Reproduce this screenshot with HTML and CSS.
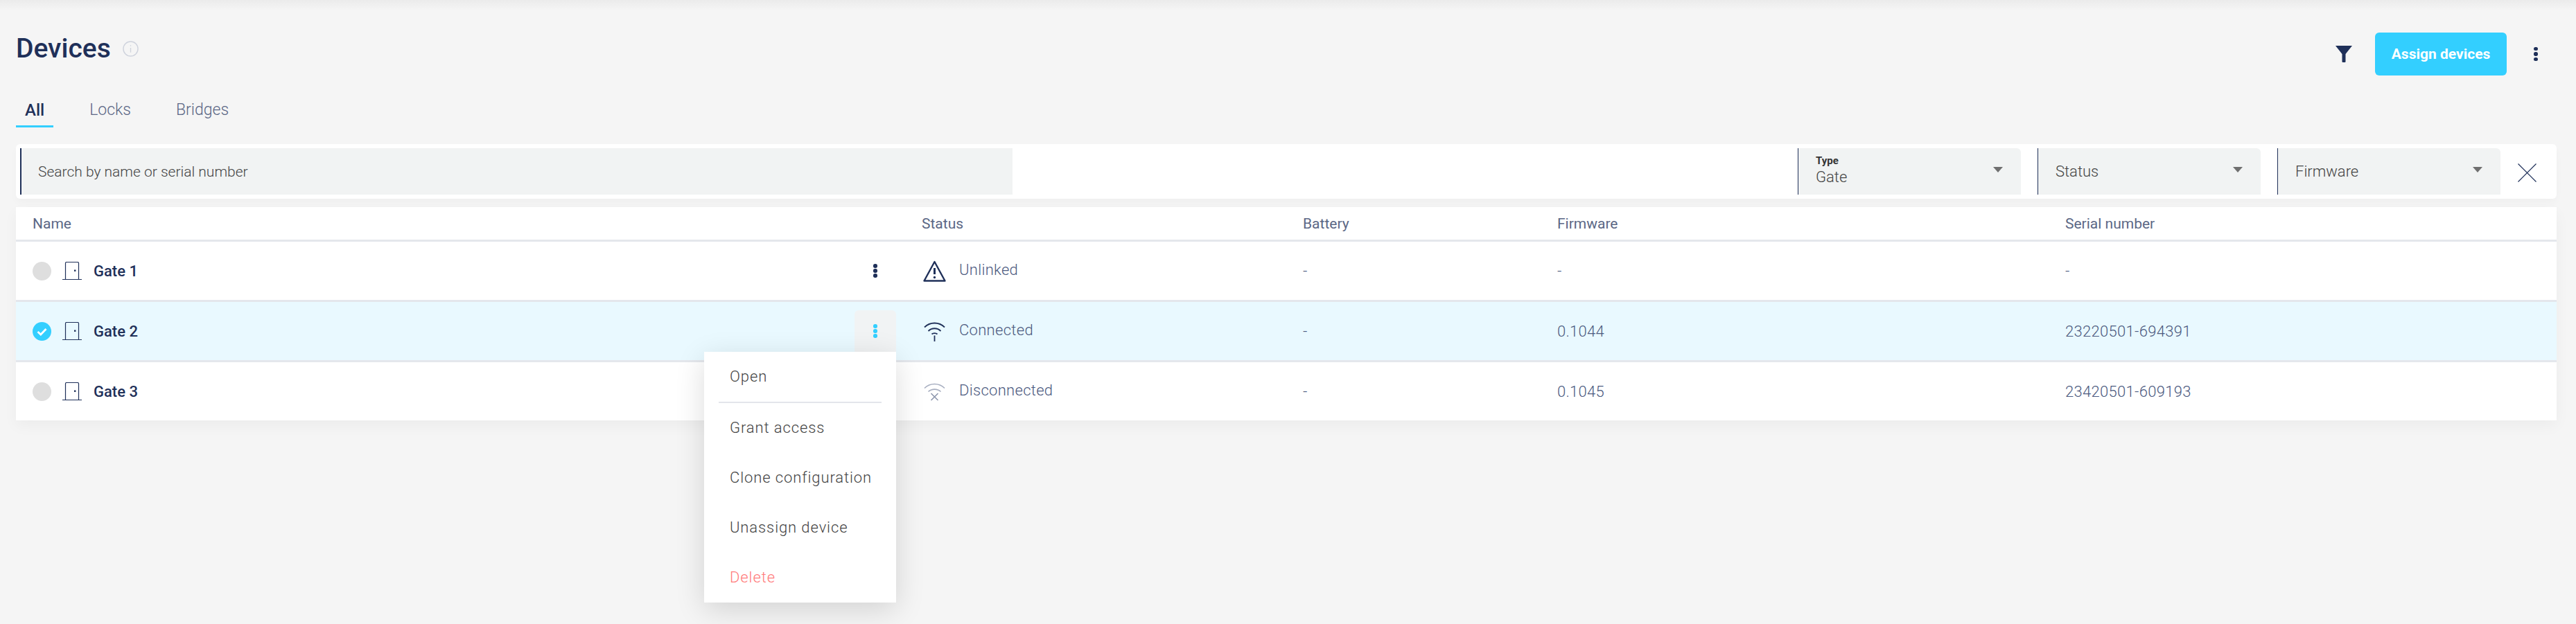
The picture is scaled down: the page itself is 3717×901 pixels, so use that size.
FILE: index.html
```html
<!DOCTYPE html>
<html lang="en">
<head>
  <meta charset="UTF-8" />
  <title>Devices</title>
  <link rel="stylesheet" href="styles.css">
</head>
<body>
  <div class="top-shade"></div>
  <div class="page">
    <div class="page-head">
      <div class="title-wrap">
        <h1>Devices</h1>
        <svg class="info-icon" viewBox="0 0 24 24"><circle cx="12" cy="12" r="11" fill="none" stroke="#cfd3dd" stroke-width="1.5"/><path d="M12 10.5v7M12 6.5v1.6" stroke="#cfd3dd" stroke-width="1.4" fill="none"/></svg>
      </div>
      <div class="head-actions">
        <svg class="funnel" viewBox="0 0 24 24"><path d="M0 0h24L14.500 12v11a1 1 0 0 1-1 1h-3a1 1 0 0 1-1-1V12z" fill="#1f3059"/></svg>
        <button class="assign-btn">Assign devices</button>
        <div class="kebab-plain"><span></span><span></span><span></span></div>
      </div>
    </div>

    <div class="tabs">
      <div class="tab active">All</div>
      <div class="tab">Locks</div>
      <div class="tab">Bridges</div>
    </div>

    <div class="filters">
      <div class="search">Search by name or serial number</div>
      <div class="filter-gap"></div>
      <div class="select">
        <div class="select-text type-text"><div class="select-label">Type</div><div>Gate</div></div>
        <div class="caret"></div>
      </div>
      <div class="select">
        <div class="select-text">Status</div>
        <div class="caret"></div>
      </div>
      <div class="select">
        <div class="select-text">Firmware</div>
        <div class="caret"></div>
      </div>
      <svg class="clear-icon" viewBox="0 0 27 27"><path d="M.5.5l26 26M26.500.5l-26 26" stroke="#1f3059" stroke-width="1.2" fill="none"/></svg>
    </div>

    <div class="table">
      <div class="row head">
        <div class="cell-name">Name</div>
        <div>Status</div>
        <div>Battery</div>
        <div>Firmware</div>
        <div>Serial number</div>
      </div>

      <div class="row">
        <div class="cell-name">
          <span class="radio"></span>
          <svg class="door" viewBox="0 0 28 26"><path d="M0 25.500h28M4.500 25V2a1.500 1.500 0 0 1 1.500-1.500h16A1.500 1.500 0 0 1 23.500 2v23" fill="none" stroke="#1f3059" stroke-width="1.200"/><rect x="17" y="11.500" width="2.400" height="2.400" fill="#1f3059"/></svg>
          <span class="device-name">Gate 1</span>
          <div class="kebab"><span></span><span></span><span></span></div>
        </div>
        <div class="status">
          <svg class="status-icon" viewBox="0 0 33 31"><path d="M16.500 2L1.500 29.500h30z" fill="none" stroke="#1f3059" stroke-width="2.400" stroke-linejoin="round"/><path d="M16.500 11v9" stroke="#1f3059" stroke-width="3"/><circle cx="16.500" cy="24.500" r="1.700" fill="#1f3059"/></svg>
          <span class="status-text">Unlinked</span>
        </div>
        <div>-</div>
        <div>-</div>
        <div>-</div>
      </div>

      <div class="row selected">
        <div class="cell-name">
          <span class="radio checked"><svg viewBox="0 0 27 27"><path d="M7.500 14l4.300 4 7.700-8" fill="none" stroke="#fff" stroke-width="2.800"/></svg></span>
          <svg class="door" viewBox="0 0 28 26"><path d="M0 25.500h28M4.500 25V2a1.500 1.500 0 0 1 1.500-1.500h16A1.500 1.500 0 0 1 23.500 2v23" fill="none" stroke="#1f3059" stroke-width="1.200"/><rect x="17" y="11.500" width="2.400" height="2.400" fill="#1f3059"/></svg>
          <span class="device-name">Gate 2</span>
          <div class="kebab open"><span></span><span></span><span></span>
            <div class="menu">
              <div class="menu-item">Open</div>
              <div class="menu-divider"></div>
              <div class="menu-item">Grant access</div>
              <div class="menu-item">Clone configuration</div>
              <div class="menu-item">Unassign device</div>
              <div class="menu-item danger">Delete</div>
            </div>
          </div>
        </div>
        <div class="status">
          <svg class="status-icon wifi" viewBox="0 0 33 30"><path d="M2 9.500C10 1.500 23 1.500 31 9.500M7.500 15C12.500 10 20.500 10 25.500 15" fill="none" stroke="#1f3059" stroke-width="1.800"/><path d="M12.500 19.500C14.500 17.700 18.500 17.700 20.500 19.500" fill="none" stroke="#1f3059" stroke-width="1.800"/><path d="M16.500 21.500V30" stroke="#1f3059" stroke-width="1.800"/></svg>
          <span class="status-text">Connected</span>
        </div>
        <div>-</div>
        <div>0.1044</div>
        <div>23220501-694391</div>
      </div>

      <div class="row last">
        <div class="cell-name">
          <span class="radio"></span>
          <svg class="door" viewBox="0 0 28 26"><path d="M0 25.500h28M4.500 25V2a1.500 1.500 0 0 1 1.500-1.500h16A1.500 1.500 0 0 1 23.500 2v23" fill="none" stroke="#1f3059" stroke-width="1.200"/><rect x="17" y="11.500" width="2.400" height="2.400" fill="#1f3059"/></svg>
          <span class="device-name">Gate 3</span>
        </div>
        <div class="status">
          <svg class="status-icon wifi-off" viewBox="0 0 33 27"><path d="M2 8.500C10 .5 23 .5 31 8.500M7.500 13.500C12.500 9 20.500 9 25.500 13.500" fill="none" stroke="#a7aec0" stroke-width="1.600"/><path d="M11.500 16l10 10M21.500 16l-10 10" stroke="#8d96ad" stroke-width="1.600"/></svg>
          <span class="status-text">Disconnected</span>
        </div>
        <div>-</div>
        <div>0.1045</div>
        <div>23420501-609193</div>
      </div>
    </div>
  </div>
</body>
</html>
```

FILE: styles.css
```css
body {
  margin: 0;
  height: 901px;
  overflow: hidden;
  font-family: Roboto, sans-serif;
  background-color: #f5f5f5;
  color: #1f3059;
}
.top-shade {
  height: 15px;
  background: linear-gradient(#ebebeb, #f5f5f5);
}
.page {
  padding: 32px 28px 0 23px;
}
.page-head {
  display: flex;
  justify-content: space-between;
  align-items: flex-start;
}
.title-wrap {
  display: flex;
  align-items: center;
  gap: 17px;
  height: 46px;
}
h1 {
  margin: 0;
  font-size: 39px;
  line-height: 46px;
  font-weight: 500;
  color: #1f3059;
}
.info-icon {
  width: 23px;
  height: 23px;
}
.head-actions {
  display: flex;
  align-items: center;
}
.funnel {
  width: 24px;
  height: 24px;
  margin-right: 33px;
}
.assign-btn {
  width: 190px;
  height: 62px;
  padding: 0;
  border: none;
  border-radius: 6px;
  background-color: #33cfff;
  color: white;
  font-family: Roboto, sans-serif;
  font-size: 21px;
  font-weight: 700;
}
.kebab-plain {
  display: flex;
  flex-direction: column;
  align-items: center;
  gap: 2px;
  margin: 0 27px 0 39px;
  width: 6px;
}
.kebab-plain span,
.kebab span {
  width: 5.500px;
  height: 5.500px;
  border-radius: 50%;
  background-color: #1f3059;
}
.tabs {
  display: flex;
  gap: 39px;
  margin-top: 36px;
}
.tab {
  padding: 0 13px 8px;
  font-size: 23px;
  line-height: 28px;
  font-weight: 300;
  color: #5b6785;
  border-bottom: 3px solid transparent;
}
.tab.active {
  font-weight: 500;
  font-size: 24px;
  color: #1f3059;
  border-bottom-color: #33cfff;
}
.filters {
  display: flex;
  align-items: center;
  gap: 24px;
  height: 79px;
  box-sizing: border-box;
  margin-top: 24px;
  padding: 0 29px 0 6px;
  background-color: white;
  border-radius: 6px;
  box-shadow: 0 6px 12px rgba(0,0,0,0.025);
}
.search,
.select {
  height: 67px;
  box-sizing: border-box;
  border-left: 2px solid #1f3059;
  background-color: #f1f3f3;
  font-size: 22px;
  font-weight: 300;
  color: #444;
}
.search {
  display: flex;
  align-items: center;
  width: 1432px;
  padding-left: 24px;
  font-size: 21px;
}
.filter-gap {
  flex: 1;
}
.select {
  display: flex;
  align-items: center;
  justify-content: space-between;
  width: 322px;
  padding: 0 26px 0 25px;
  border-left-width: 1px;
  border-top-right-radius: 6px;
}
.type-text {
  padding-bottom: 5px;
}
.select-label {
  font-size: 15px;
  line-height: 18px;
  font-weight: 700;
  color: #333;
  margin-bottom: 2px;
}
.caret {
  width: 0;
  height: 0;
  margin-bottom: 5px;
  border-left: 7.500px solid transparent;
  border-right: 7.500px solid transparent;
  border-top: 8px solid #6f6f6f;
}
.clear-icon {
  width: 27px;
  height: 27px;
  flex-shrink: 0;
  margin-top: 4px;
  margin-left: 1px;
}
.table {
  margin-top: 12px;
  background-color: white;
  box-shadow: 0 8px 20px rgba(0,0,0,0.04);
}
.row {
  display: grid;
  grid-template-columns: 1307px 550px 367px 733px 1fr;
  align-items: center;
  height: 87px;
  box-sizing: border-box;
  border-bottom: 3px solid #e4e7ec;
  font-size: 22px;
  font-weight: 300;
  letter-spacing: 0.3px;
  color: #4c5a80;
}
.row.head {
  height: 50px;
  font-weight: 400;
  font-size: 21px;
  letter-spacing: 0;
  color: #5b6785;
}
.row.selected {
  background-color: #e9f9ff;
}
.row.last {
  height: 84px;
  border-bottom: none;
}
.cell-name {
  display: flex;
  align-items: center;
  padding: 0 37px 0 24px;
}
.radio {
  width: 27px;
  height: 27px;
  border-radius: 50%;
  background-color: #dedede;
  flex-shrink: 0;
}
.radio.checked {
  background-color: #33cfff;
}
.radio svg {
  display: block;
}
.door {
  width: 28px;
  height: 26px;
  margin-left: 16px;
  flex-shrink: 0;
}
.device-name {
  margin-left: 17px;
  font-weight: 500;
  letter-spacing: 0;
  color: #1f3059;
}
.kebab {
  position: relative;
  display: flex;
  flex-direction: column;
  align-items: center;
  justify-content: center;
  gap: 1.500px;
  width: 60px;
  height: 60px;
  margin-left: auto;
}
.kebab.open {
  background-color: #f1f3f4;
  border-radius: 6px 6px 0 0;
}
.kebab.open > span {
  background-color: #33cfff;
}
.menu {
  position: absolute;
  top: 100%;
  right: 0;
  z-index: 2;
  width: 277px;
  height: 362px;
  background-color: white;
  box-shadow: 0 10px 40px rgba(0,0,0,0.14);
}
.menu-item {
  display: flex;
  align-items: center;
  height: 72px;
  padding-left: 37px;
  font-size: 22px;
  font-weight: 300;
  letter-spacing: 0.9px;
  color: #444;
}
.menu-item:first-child {
  height: 71px;
}
.menu-item.danger {
  color: #ff7b7b;
}
.menu-divider {
  height: 2px;
  margin: 1px 21px -1px;
  background-color: #e3e5eb;
}
.status {
  display: flex;
  align-items: center;
}
.status-icon {
  width: 33px;
  margin-left: 2px;
  flex-shrink: 0;
}
.status-text {
  margin-left: 19px;
  padding-bottom: 4px;
}
```
